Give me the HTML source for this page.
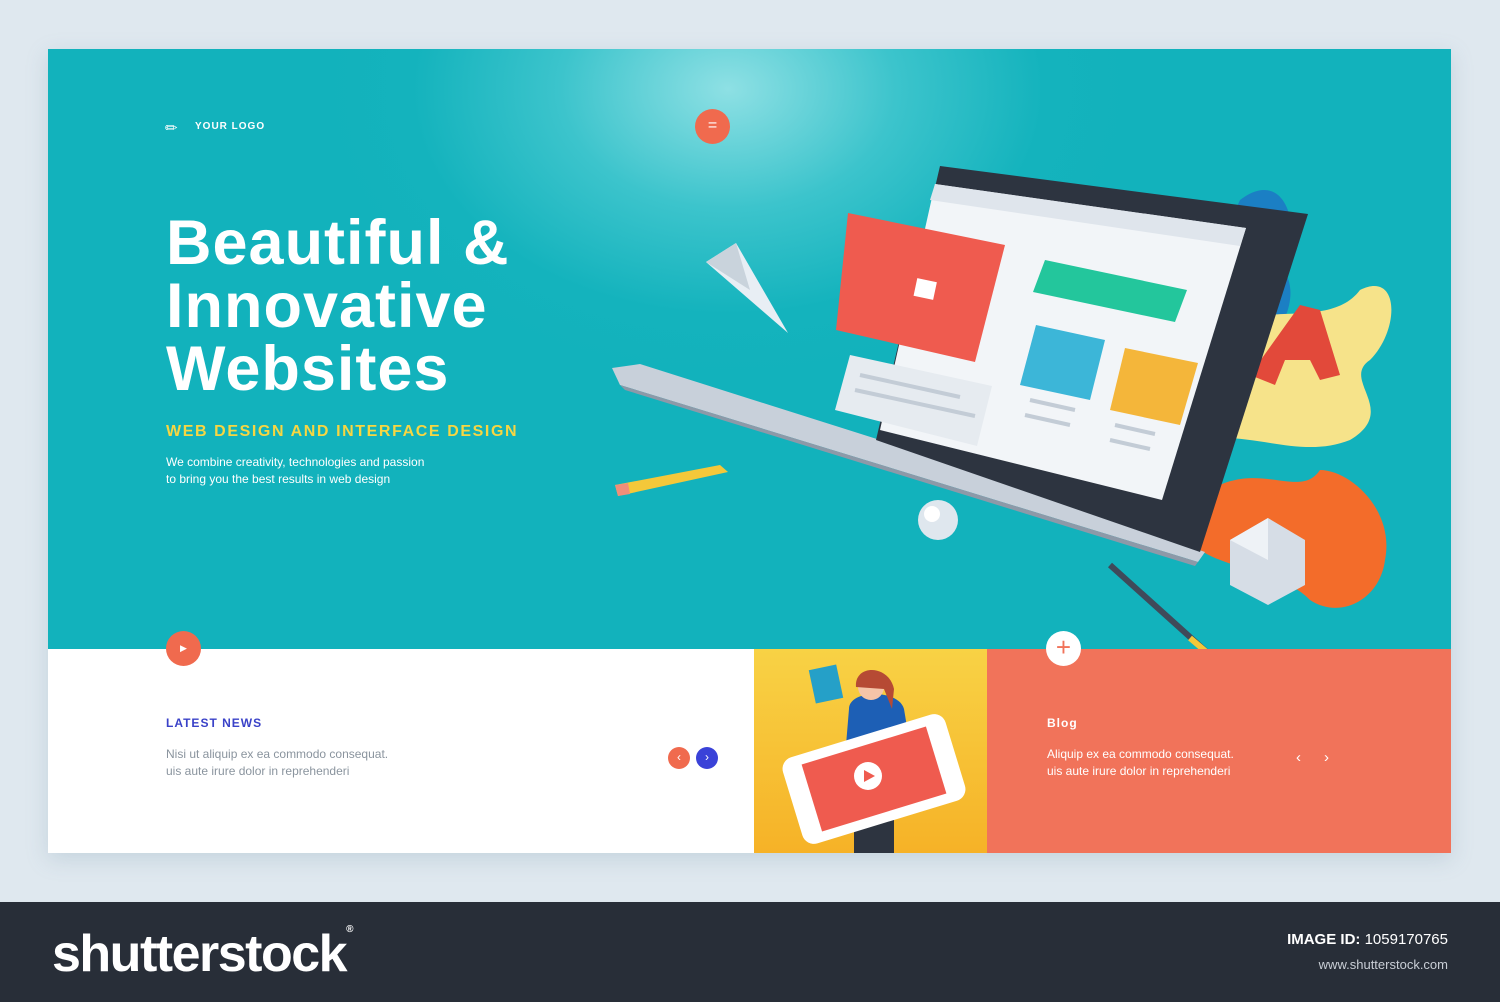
<!DOCTYPE html>
<html><head><meta charset="utf-8"><style>
*{margin:0;padding:0;box-sizing:border-box}
body{width:1500px;height:1002px;background:#dfe8ef;position:relative;overflow:hidden;font-family:"Liberation Sans",sans-serif}
.abs{position:absolute}
#card{left:48px;top:49px;width:1403px;height:804px;box-shadow:0 6px 20px rgba(120,150,170,.25);overflow:hidden}
#hero{left:0;top:0;width:1403px;height:600px;background:radial-gradient(ellipse 420px 300px at 680px 40px,#8ee0e4 0%,#3cc4cc 40%,#14b3bd 75%,#12b2bc 100%)}
h1{color:#fff;font-size:63px;line-height:63px;font-weight:bold;letter-spacing:1px}
</style></head><body>
<div id="card" class="abs">
 <div id="hero" class="abs"></div>
 <div class="abs" style="left:117px;top:70px;color:#fff;font-size:15px">&#9999;</div>
 <div class="abs" style="left:147px;top:72px;color:#fff;font-size:10px;font-weight:bold;letter-spacing:1px">YOUR LOGO</div>
 <h1 class="abs" style="left:118px;top:163px">Beautiful &amp;<br>Innovative<br>Websites</h1>
 <div class="abs" style="left:118px;top:374px;color:#f7d642;font-size:16px;font-weight:bold;letter-spacing:1.6px">WEB DESIGN AND INTERFACE DESIGN</div>
 <div class="abs" style="left:118px;top:405px;color:#fff;font-size:12px;line-height:17px">We combine creativity, technologies and passion<br>to bring you the best results in web design</div>
 <div class="abs" style="left:647px;top:60px;width:35px;height:35px;border-radius:50%;background:#f06a4e;color:#fff;text-align:center;line-height:34px;font-size:16px">=</div>

 <svg class="abs" style="left:0;top:0" width="1403" height="804" viewBox="48 49 1403 804">
  <polygon points="706,262 736,243 788,333" fill="#e8eef4"/>
  <polygon points="706,262 736,243 750,290" fill="#c9d3dc"/>
  <polygon points="615,485 720,465 728,472 618,496" fill="#f4c83a"/>
  <polygon points="615,485 628,483 630,494 618,496" fill="#f08e7a"/>
  <circle cx="938" cy="520" r="20" fill="#dfe7ee"/>
  <circle cx="932" cy="514" r="8" fill="#fff"/>
  <line x1="1110" y1="565" x2="1210" y2="655" stroke="#3f4a5a" stroke-width="6"/>
  <line x1="1190" y1="638" x2="1210" y2="655" stroke="#f4c83a" stroke-width="6"/>
  <path d="M1240,200 C1285,165 1305,230 1280,265 C1310,300 1270,350 1230,395 L1195,300 Z" fill="#1b7fc4"/>
  <path d="M1200,330 C1260,300 1330,330 1360,290 C1400,270 1400,330 1370,360 C1340,380 1400,410 1350,440 C1300,460 1250,430 1200,440 Z" fill="#f6e38a"/>
  <path d="M1210,490 C1260,460 1300,500 1320,470 C1350,470 1395,510 1385,560 C1380,600 1340,620 1310,600 C1280,570 1230,570 1200,550 Z" fill="#f36c2a"/>
  <polygon points="1250,375 1300,305 1320,310 1340,375 1320,380 1310,360 1285,360 1275,385" fill="#e2493a"/>
  <polygon points="1230,540 1268,518 1305,540 1305,585 1268,605 1230,585" fill="#d6dde6"/>
  <polygon points="1230,540 1268,518 1268,560" fill="#eef2f6"/>
  <polygon points="612,368 640,364 880,440 1205,552 1198,562 620,385" fill="#c8d0da"/>
  <polygon points="620,385 1198,562 1195,566 625,390" fill="#8d99a8"/>
  <polygon points="940,166 1308,214 1200,552 876,440" fill="#2d3440"/>
  <polygon points="935,184 1246,228 1162,500 880,430" fill="#f2f5f8"/>
  <polygon points="935,184 1246,228 1240,246 930,200" fill="#dfe5ec"/>
  <polygon points="848,213 1005,245 975,362 836,330" fill="#ef5b4f"/>
  <polygon points="1045,260 1187,290 1175,322 1033,292" fill="#23c69c"/>
  <polygon points="1036,325 1105,340 1090,400 1020,385" fill="#3cb6d8"/>
  <polygon points="1125,348 1198,363 1180,425 1110,410" fill="#f4b63a"/>
  <polygon points="850,355 992,386 977,446 835,410" fill="#e6ebf0"/>
  <rect x="915" y="280" width="20" height="18" fill="#fff" transform="rotate(12 925 290)"/>
  <g stroke="#c3ccd6" stroke-width="4">
   <line x1="1030" y1="400" x2="1075" y2="410"/><line x1="1025" y1="415" x2="1070" y2="425"/>
   <line x1="1115" y1="425" x2="1155" y2="434"/><line x1="1110" y1="440" x2="1150" y2="449"/>
   <line x1="860" y1="375" x2="960" y2="397"/><line x1="855" y1="390" x2="975" y2="416"/>
  </g>
 </svg>

 <div class="abs" style="left:0;top:600px;width:706px;height:204px;background:#fff"></div>
 <div class="abs" style="left:706px;top:600px;width:233px;height:204px;background:linear-gradient(180deg,#f8d245,#f6b227)"></div>
 <div class="abs" style="left:939px;top:600px;width:464px;height:204px;background:#f1735a"></div>
 <svg class="abs" style="left:706px;top:600px" width="233" height="204">
  <rect x="100" y="60" width="40" height="144" fill="#2d3440"/>
  <path d="M95,60 C95,40 145,40 150,60 L160,120 L90,120 Z" fill="#1d5fb5"/>
  <circle cx="117" cy="38" r="13" fill="#f5c4a8"/>
  <path d="M102,38 C100,15 135,15 140,40 L138,60 L130,40 Z" fill="#b64a34"/>
  <rect x="58" y="18" width="28" height="34" fill="#25a0c8" transform="rotate(-12 72 35)"/>
  <rect x="35" y="85" width="170" height="90" rx="12" fill="#fff" transform="rotate(-17 120 130)"/>
  <rect x="55" y="95" width="130" height="70" fill="#ef5b4f" transform="rotate(-17 120 130)"/>
  <circle cx="114" cy="127" r="14" fill="#fff"/><polygon points="110,121 121,127 110,133" fill="#ef5b4f"/>
 </svg>
 <div class="abs" style="left:118px;top:582px;width:35px;height:35px;border-radius:50%;background:#f06a4e;color:#fff;text-align:center;line-height:35px;font-size:9px">&#9654;</div>
 <div class="abs" style="left:998px;top:582px;width:35px;height:35px;border-radius:50%;background:#fff;color:#f1735a;text-align:center;line-height:33px;font-size:26px">+</div>
 <div class="abs" style="left:118px;top:667px;color:#3a42c8;font-size:12px;font-weight:bold;letter-spacing:1px">LATEST NEWS</div>
 <div class="abs" style="left:118px;top:697px;color:#8a949e;font-size:12px;line-height:17px">Nisi ut aliquip ex ea commodo consequat.<br>uis aute irure dolor in reprehenderi</div>
 <div class="abs" style="left:620px;top:698px;width:22px;height:22px;border-radius:50%;background:#f06a4e;color:#fff;text-align:center;line-height:21px;font-size:12px">&#8249;</div>
 <div class="abs" style="left:648px;top:698px;width:22px;height:22px;border-radius:50%;background:#3a42d8;color:#fff;text-align:center;line-height:21px;font-size:12px">&#8250;</div>
 <div class="abs" style="left:999px;top:667px;color:#fff;font-size:12px;font-weight:bold;letter-spacing:1px">Blog</div>
 <div class="abs" style="left:999px;top:697px;color:#fff;font-size:12px;line-height:17px">Aliquip ex ea commodo consequat.<br>uis aute irure dolor in reprehenderi</div>
 <div class="abs" style="left:1248px;top:700px;color:#fff;font-size:15px">&#8249;</div>
 <div class="abs" style="left:1276px;top:700px;color:#fff;font-size:15px">&#8250;</div>
</div>
<div class="abs" style="left:0;top:902px;width:1500px;height:100px;background:#282e38"></div>
<div class="abs" style="left:52px;top:924px;color:#fff;font-size:52px;font-weight:bold;letter-spacing:-1.5px">shutterstock<span style="font-size:10px;vertical-align:top">®</span></div>
<div class="abs" style="right:52px;top:931px;color:#fff;font-size:15px"><b>IMAGE ID:</b> 1059170765</div>
<div class="abs" style="right:52px;top:957px;color:#c9ced6;font-size:13px">www.shutterstock.com</div>
</body></html>
